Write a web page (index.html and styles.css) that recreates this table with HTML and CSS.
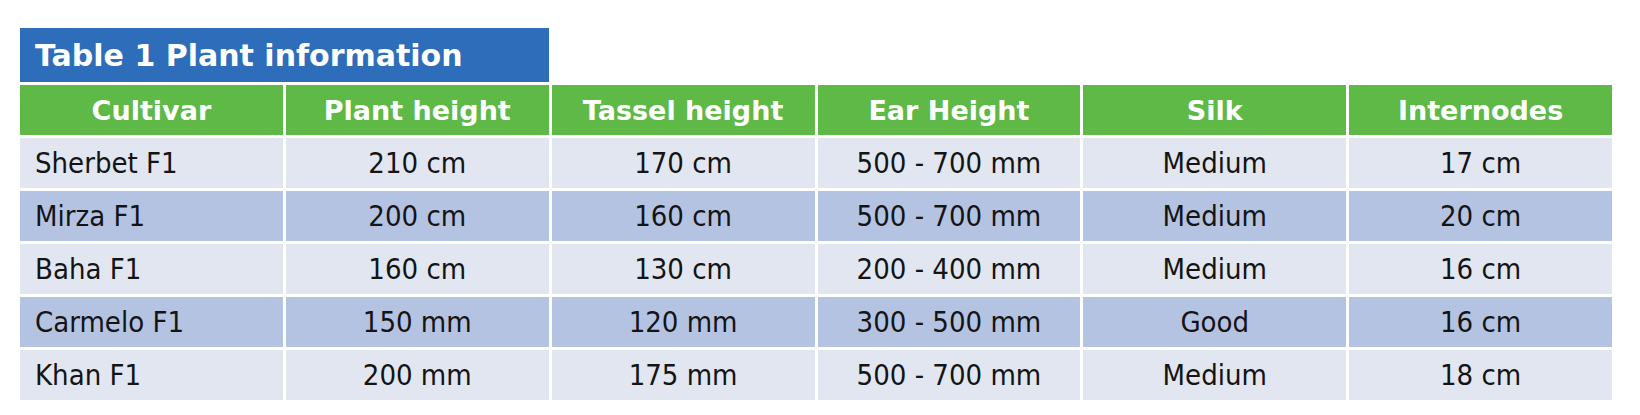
FILE: index.html
```html
<!DOCTYPE html>
<html>
<head>
<meta charset="utf-8">
<link rel="stylesheet" href="styles.css">
</head>
<body>
<div class="page">
  <div class="grid">
    <div class="title">Table 1 Plant information</div>
    <div class="spacer"></div>
    <div class="th">Cultivar</div>
    <div class="th">Plant height</div>
    <div class="th">Tassel height</div>
    <div class="th">Ear Height</div>
    <div class="th">Silk</div>
    <div class="th">Internodes</div>

    <div class="td first light">Sherbet F1</div>
    <div class="td light">210 cm</div>
    <div class="td light">170 cm</div>
    <div class="td light">500 - 700 mm</div>
    <div class="td light">Medium</div>
    <div class="td light">17 cm</div>

    <div class="td first dark">Mirza F1</div>
    <div class="td dark">200 cm</div>
    <div class="td dark">160 cm</div>
    <div class="td dark">500 - 700 mm</div>
    <div class="td dark">Medium</div>
    <div class="td dark">20 cm</div>

    <div class="td first light">Baha F1</div>
    <div class="td light">160 cm</div>
    <div class="td light">130 cm</div>
    <div class="td light">200 - 400 mm</div>
    <div class="td light">Medium</div>
    <div class="td light">16 cm</div>

    <div class="td first dark">Carmelo F1</div>
    <div class="td dark">150 mm</div>
    <div class="td dark">120 mm</div>
    <div class="td dark">300 - 500 mm</div>
    <div class="td dark">Good</div>
    <div class="td dark">16 cm</div>

    <div class="td first light">Khan F1</div>
    <div class="td light">200 mm</div>
    <div class="td light">175 mm</div>
    <div class="td light">500 - 700 mm</div>
    <div class="td light">Medium</div>
    <div class="td light">18 cm</div>
  </div>
</div>
</body>
</html>
```

FILE: styles.css
```css
html, body {
  margin: 0;
  padding: 0;
  background: #ffffff;
}

.page {
  padding: 28px 0 0 20px;
  font-family: "DejaVu Sans Condensed", "DejaVu Sans", sans-serif;
  color: #141414;
}

.grid {
  width: 1592px;
  display: grid;
  grid-template-columns: repeat(6, 1fr);
  grid-template-rows: 54px 50px repeat(5, 50px);
  column-gap: 3px;
  row-gap: 3px;
}

.title {
  grid-column: 1 / span 2;
  background: #2e6db9;
  color: #ffffff;
  font-family: "DejaVu Sans", sans-serif;
  font-weight: bold;
  font-size: 30px;
  display: flex;
  align-items: center;
  padding-left: 15px;
}

.spacer {
  grid-column: 3 / span 4;
}

.th {
  background: #5eb947;
  color: #ffffff;
  font-family: "DejaVu Sans", sans-serif;
  font-weight: bold;
  font-size: 27px;
  display: flex;
  align-items: center;
  justify-content: center;
}

.td {
  font-size: 29px;
  display: flex;
  align-items: center;
  justify-content: center;
}

.td.first {
  justify-content: flex-start;
  padding-left: 15px;
}

.light {
  background: #e2e6f1;
}

.dark {
  background: #b5c3e3;
}
```
